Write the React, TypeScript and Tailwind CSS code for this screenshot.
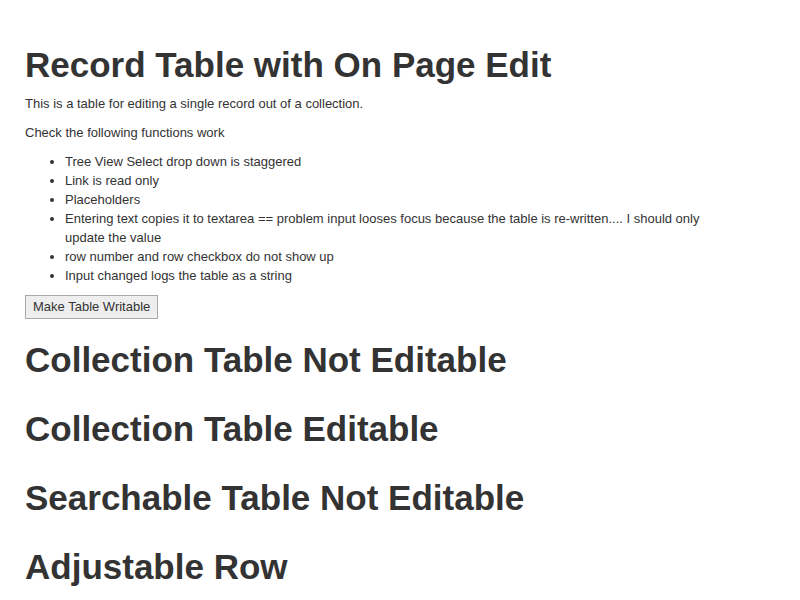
import React from 'react';

const checks: string[] = [
  'Tree View Select drop down is staggered',
  'Link is read only',
  'Placeholders',
  'Entering text copies it to textarea == problem input looses focus because the table is re-written.... I should only update the value',
  'row number and row checkbox do not show up',
  'Input changed logs the table as a string',
];

const sections: string[] = [
  'Collection Table Not Editable',
  'Collection Table Editable',
  'Searchable Table Not Editable',
  'Adjustable Row',
];

const App: React.FC = () => {
  return (
    <div className="flex min-h-screen flex-col bg-white px-[25px] pt-[25px] font-['Liberation_Sans',Arial,sans-serif] text-[13px] leading-[19px] text-[#333]">
      <h1 className="mt-[20px] mb-[10px] text-[35px] leading-[39px] font-bold">Record Table with On Page Edit</h1>
      <p className="mb-[10px]">This is a table for editing a single record out of a collection.</p>
      <p className="mb-[10px]">Check the following functions work</p>
      <ul className="mb-[10px] list-disc pl-[40px] pr-[60px]">
        {checks.map(item => (
          <li key={item}>{item}</li>
        ))}
      </ul>
      <button className="mb-[1px] self-start border border-[#a9a9a9] bg-[#eeeeee] px-[7px] py-[2px] text-[13px] leading-[18px] text-[#333]">
        Make Table Writable
      </button>
      {sections.map(title => (
        <h1 key={title} className="mt-[20px] mb-[10px] text-[35px] leading-[39px] font-bold">
          {title}
        </h1>
      ))}
    </div>
  );
};

export default App;
